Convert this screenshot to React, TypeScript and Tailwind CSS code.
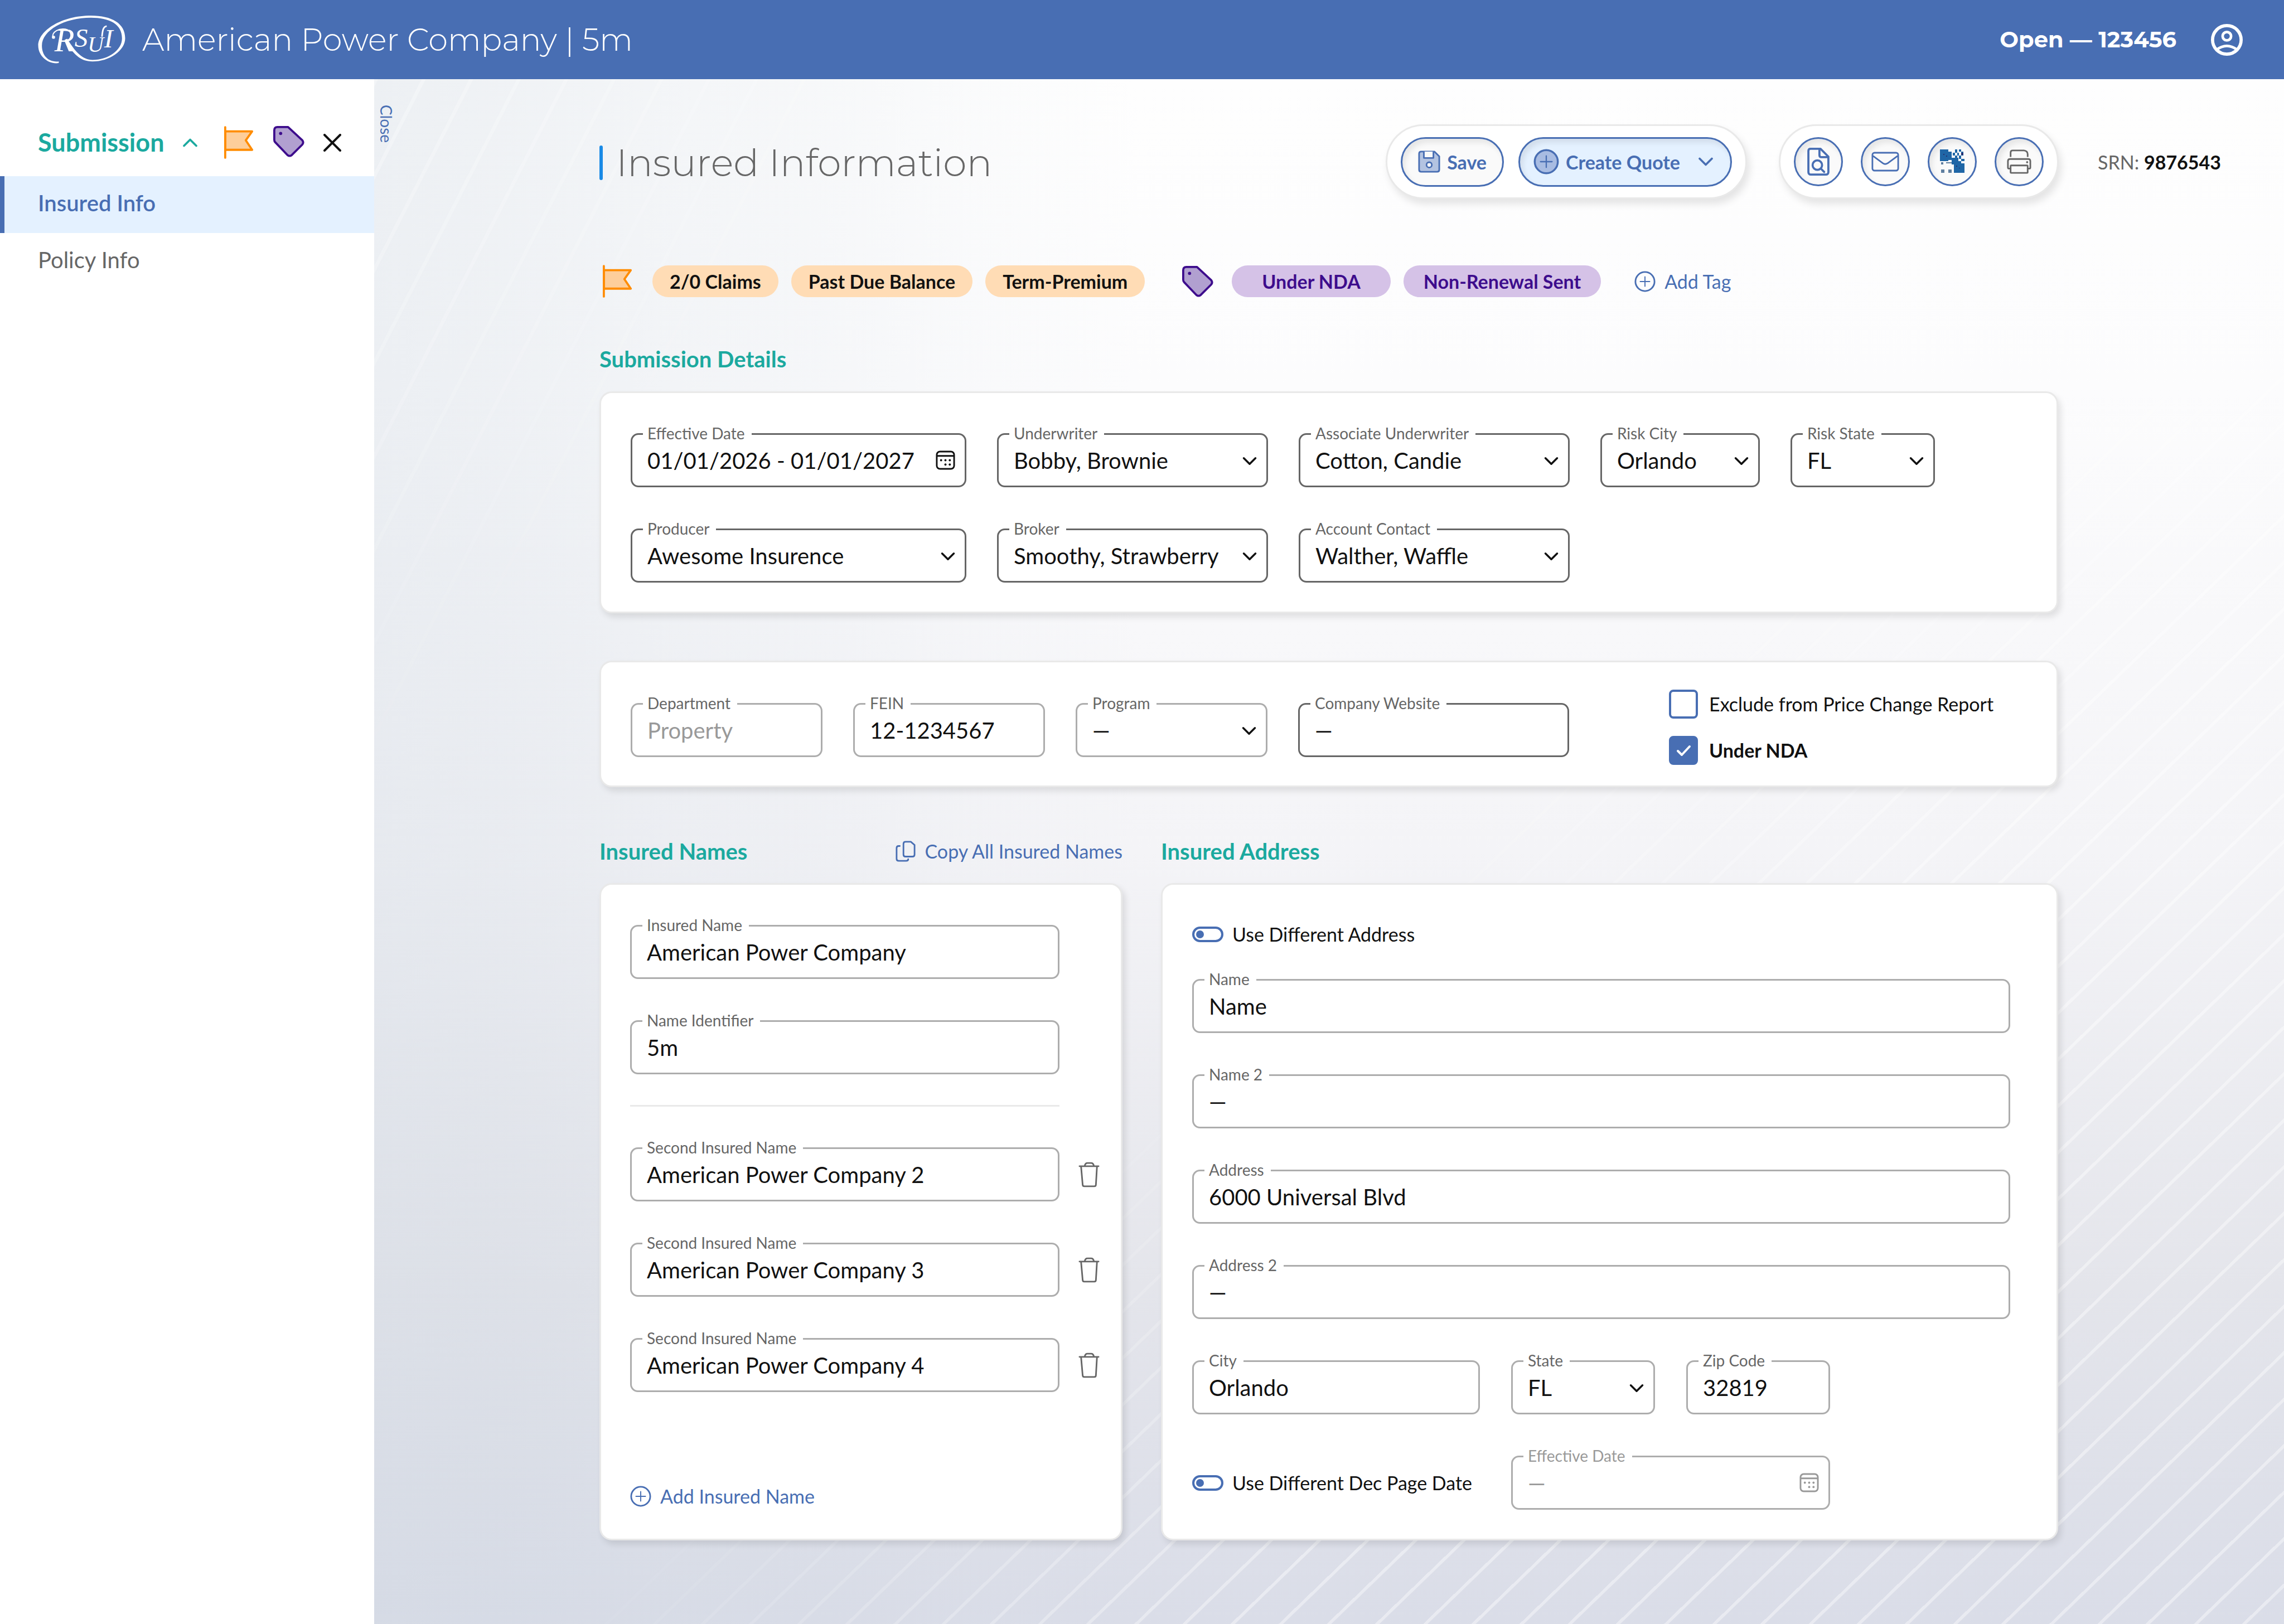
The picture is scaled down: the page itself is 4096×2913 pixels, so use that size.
import { useId, type ReactNode } from 'react';
import { ChevronDown, ChevronUp } from 'lucide-react';
import { clsx } from 'clsx';

function Logo() {
  return (
    <svg viewBox="0 0 165 91" className="h-[86px] w-[157px]" fill="#fff" role="img" aria-label="RSUI">
      <path d="M39 90C20 93 0 78 0 57C0 28 45 0 100 0C140 0 165 15 165 43C165 66 135 87 103 87C79 87 66 72 50 46L55 44C71 70 84 84 103 84C132 84 159 66 159 43C159 16 135 4 100 4C50 4 7 28 7 57C7 77 20 89 39 87Z" />
      <path d="M56 27C40 22 25 31 28 42" fill="none" stroke="#fff" strokeWidth="2" />
      <circle cx="29" cy="41" r="3" />
      <path d="M121 40C122 29 123 21 130 20" fill="none" stroke="#fff" strokeWidth="3" />
      <g className="font-['Liberation_Serif',serif] italic">
        <text x="31" y="68" fontSize="62">R</text>
        <text x="69" y="59" fontSize="50">S</text>
        <text x="94" y="69" fontSize="42">U</text>
        <text x="125" y="60" fontSize="50">I</text>
      </g>
    </svg>
  );
}

function UserIcon() {
  return (
    <svg viewBox="0 0 60 60" className="size-[57px]" fill="none" stroke="#fff" strokeWidth="6">
      <circle cx="30" cy="30" r="27" />
      <circle cx="30" cy="23" r="8" strokeWidth="5" />
      <path d="M10 49Q30 34 50 49" strokeWidth="5" />
    </svg>
  );
}

function FlagIcon() {
  return (
    <svg viewBox="0 0 56 62" className="h-[59px] w-[53px] shrink-0" fill="none" stroke="#ff8c00" strokeWidth="4" strokeLinecap="round" strokeLinejoin="round">
      <path d="M2 10H53L41 27L53 45H2Z" fill="#fdce9b" />
      <path d="M2 2V60" />
    </svg>
  );
}

function TagIcon() {
  return (
    <svg viewBox="0 0 59 59" className="size-[56px] shrink-0" fill="#b1a0d0" stroke="#3d0c8c" strokeWidth="4" strokeLinejoin="round">
      <path d="M8 2H28L55 27Q58 31 55 35L35 55Q31 58 27 55L4 31Q2 29 2 26V8Q2 2 8 2Z" />
      <circle cx="14" cy="14" r="3" fill="#3d0c8c" stroke="none" />
    </svg>
  );
}

function PlusCircleIcon({ filled }: { filled?: boolean }) {
  return (
    <svg viewBox="0 0 40 40" className={clsx('shrink-0', filled ? 'size-[46px]' : 'size-[38px]')} fill={filled ? '#a8bce2' : 'none'} stroke="#486eb3" strokeWidth="3" strokeLinecap="round">
      <circle cx="20" cy="20" r="18" />
      <path d="M20 11V29M11 20H29" strokeWidth="2" />
    </svg>
  );
}

function SaveIcon() {
  return (
    <svg viewBox="0 0 42 42" className="size-[40px] shrink-0" fill="#b3c3e1" stroke="#486eb3" strokeWidth="3" strokeLinejoin="round">
      <path d="M6 2H31L40 11V36Q40 40 36 40H6Q2 40 2 36V6Q2 2 6 2Z" />
      <path d="M11 2V14H29V2" fill="#fafafa" />
      <circle cx="21" cy="27" r="5" fill="#fafafa" />
    </svg>
  );
}

function DocSearchIcon() {
  return (
    <svg viewBox="0 0 42 53" className="h-[50px] w-[40px]" fill="none" stroke="#486eb3" strokeWidth="4" strokeLinecap="round" strokeLinejoin="round">
      <path d="M6 2H25L40 17V46Q40 51 35 51H7Q2 51 2 46V6Q2 2 6 2Z" />
      <path d="M23 3V14Q23 18 27 18H39" />
      <circle cx="19" cy="33" r="9" />
      <path d="M26 40L32 46" />
    </svg>
  );
}

function MailIcon() {
  return (
    <svg viewBox="0 0 53 38" className="h-[36px] w-[50px]" fill="none" stroke="#486eb3" strokeWidth="3" strokeLinejoin="round">
      <rect x="2" y="2" width="49" height="34" rx="4" />
      <path d="M3 8L22 22Q26 25 31 22L50 8" />
    </svg>
  );
}

function PixelIcon() {
  return (
    <svg viewBox="0 0 23 23" className="size-[44px]" fill="#1f66a6" shapeRendering="crispEdges">
      <path d="M0 0H8V2H11V10H8V11H0Z" />
      <path d="M11 8H17V11H20V13H23V22H13V14H11Z" />
      <path d="M14 0H16V3H14ZM18 0H20V2H18ZM20 2H22V6H20ZM16 3H18V6H16ZM12 3H14V6H12ZM18 6H20V9H18ZM20 9H23V11H20ZM14 6H16V8H14Z" />
      <path d="M1 12H3V14H1ZM6 12H11V13H6ZM1 19H4V22H1ZM8 19H11V22H8Z" fill="#5f7fa0" />
      <path d="M20 3H22V5H20ZM3 4H4V5H3ZM6 6H7V7H6ZM15 15H16V16H15ZM18 17H19V18H18Z" fill="#28306e" />
    </svg>
  );
}

function PrinterIcon() {
  return (
    <svg viewBox="0 0 46 46" className="size-[44px]" fill="none" stroke="#666" strokeWidth="3" strokeLinejoin="round">
      <path d="M7 14V6Q7 2 11 2H32Q39 3 39 9V14" />
      <path d="M7 36H4Q2 36 2 34V22Q2 18 6 18H40Q44 18 44 22V34Q44 36 42 36H39" />
      <rect x="7" y="30" width="32" height="14" rx="1" />
      <circle cx="38" cy="24" r="2" fill="#666" stroke="none" />
    </svg>
  );
}

function CopyIcon() {
  return (
    <svg viewBox="0 0 38 40" className="h-[38px] w-[36px] shrink-0" fill="none" stroke="#486eb3" strokeWidth="3" strokeLinecap="round">
      <path d="M19 2H29L36 8V26Q36 30 32 30H19Q15 30 15 26V6Q15 2 19 2Z" />
      <path d="M8 10H6Q2 10 2 14V34Q2 38 6 38H20Q24 38 24 35" />
    </svg>
  );
}

function TrashIcon() {
  return (
    <svg viewBox="0 0 40 48" className="h-[46px] w-[38px]" fill="none" stroke="#666" strokeWidth="3" strokeLinecap="round" strokeLinejoin="round">
      <path d="M2 8H38M12 7Q13 2 17 2H24Q28 2 29 7" />
      <path d="M5 9L8 43Q8 46 11 46H30Q33 46 33 43L35 9" />
    </svg>
  );
}

function CalendarIcon({ color }: { color: string }) {
  return (
    <svg viewBox="0 0 36 36" className="size-[35px]" fill="none" stroke={color} strokeWidth="3">
      <rect x="2" y="2" width="32" height="32" rx="6" />
      <path d="M2 10H34" />
      <g fill={color} stroke="none">
        <circle cx="10" cy="18" r="2" />
        <circle cx="18" cy="18" r="2" />
        <circle cx="26" cy="18" r="2" />
        <circle cx="18" cy="26" r="2" />
        <circle cx="26" cy="26" r="2" />
      </g>
    </svg>
  );
}

interface FieldProps {
  label: string;
  value: string;
  kind?: 'text' | 'select' | 'date';
  strong?: boolean;
  disabled?: boolean;
  className?: string;
}

function Field({ label, value, kind = 'text', strong, disabled, className }: FieldProps) {
  const id = useId();
  const box = clsx(
    'block h-[97px] w-full appearance-none rounded-[14px] border-3 bg-white px-[27px] text-[40px]',
    strong ? 'border-[#666]' : 'border-[#adadad]',
    disabled ? 'text-[#999]' : 'text-[#111]',
  );

  return (
    <div className={clsx('relative min-w-0', className)}>
      {kind === 'select' ? (
        <select id={id} defaultValue={value} className={box}>
          <option>{value}</option>
        </select>
      ) : (
        <input id={id} type="text" defaultValue={value} disabled={disabled} className={box} />
      )}
      <label
        htmlFor={id}
        className={clsx(
          'absolute top-0 left-[22px] -translate-y-1/2 bg-white pr-3 pl-2 text-[28px] leading-8 whitespace-nowrap',
          disabled && kind === 'date' ? 'text-[#999]' : 'text-[#666]',
        )}
      >
        {label}
      </label>
      {kind === 'select' && (
        <ChevronDown size={42} strokeWidth={2} className="pointer-events-none absolute top-[29px] right-3" />
      )}
      {kind === 'date' && (
        <button type="button" aria-label="Open calendar" className="absolute top-[31px] right-5">
          <CalendarIcon color={disabled ? '#999' : '#111'} />
        </button>
      )}
    </div>
  );
}

function Card({ children, className }: { children: ReactNode; className?: string }) {
  return (
    <div className={clsx('rounded-[22px] border-3 border-[#e9e9e9] bg-white shadow-[5px_7px_12px_rgba(0,0,0,0.1)]', className)}>
      {children}
    </div>
  );
}

function Toggle({ label }: { label: string }) {
  return (
    <label className="flex items-center gap-4 text-[34px] leading-[48px] whitespace-nowrap">
      <input
        type="checkbox"
        role="switch"
        className="flex h-[28px] w-[56px] appearance-none items-center rounded-full border-4 border-[#486eb3] bg-white pl-[3px] before:size-[14px] before:rounded-full before:bg-[#486eb3]"
      />
      {label}
    </label>
  );
}

function CheckRow({ label, checked }: { label: string; checked?: boolean }) {
  return (
    <label className={clsx('flex items-center gap-5 text-[34px] leading-[52px] whitespace-nowrap', checked && 'font-bold')}>
      <span className="relative size-[52px]">
        <input
          type="checkbox"
          defaultChecked={checked}
          className="block size-full appearance-none rounded-[8px] border-4 border-[#486eb3] bg-white checked:bg-[#486eb3]"
        />
        {checked && (
          <svg viewBox="0 0 52 52" className="pointer-events-none absolute inset-0" fill="none" stroke="#fff" strokeWidth="4" strokeLinecap="round" strokeLinejoin="round">
            <path d="M16 27L23 34L37 19" />
          </svg>
        )}
      </span>
      {label}
    </label>
  );
}

function Pill({ children, className }: { children: ReactNode; className: string }) {
  return <span className={clsx('flex h-[57px] items-center rounded-full text-[34px] font-bold whitespace-nowrap', className)}>{children}</span>;
}

function RoundButton({ label, children }: { label: string; children: ReactNode }) {
  return (
    <button
      type="button"
      aria-label={label}
      className="flex size-[88px] items-center justify-center rounded-full border-3 border-[#486eb3] bg-[#fafafa] shadow-[inset_5px_7px_10px_rgba(0,0,0,0.08)]"
    >
      {children}
    </button>
  );
}

const heading = 'text-[40px] leading-[48px] font-bold text-[#1ba99f]';
const toolbar = 'flex h-[134px] items-center rounded-full border-3 border-[#e9e9e9] bg-white px-[24px] shadow-[5px_9px_14px_rgba(0,0,0,0.1)]';

function Header() {
  return (
    <header className="flex h-[142px] items-center bg-[#486eb3] pr-[74px] pl-[68px] font-['Montserrat','Inter',sans-serif] text-white">
      <Logo />
      <span className="ml-[30px] text-[56px] font-light">American Power Company | 5m</span>
      <span className="ml-auto text-[40px] font-bold">Open — 123456</span>
      <button type="button" aria-label="Account" className="ml-[62px]">
        <UserIcon />
      </button>
    </header>
  );
}

function Sidebar() {
  return (
    <aside className="w-[671px] shrink-0 bg-white pt-[80px]">
      <div className="mb-[27px] flex h-[67px] items-center pl-[68px]">
        <button type="button" className="flex items-center gap-6 text-[45px] font-bold text-[#1ba99f]">
          Submission
          <ChevronUp size={44} strokeWidth={2} />
        </button>
        <span className="ml-[39px] flex gap-[35px]">
          <FlagIcon />
          <TagIcon />
        </span>
        <button type="button" aria-label="Close menu" className="ml-[34px]">
          <svg viewBox="0 0 32 32" className="size-[32px]" stroke="#111" strokeWidth="4" strokeLinecap="round">
            <path d="M2 2L30 30M30 2L2 30" />
          </svg>
        </button>
      </div>
      <nav className="text-[40px]">
        <a href="#insured" className="flex h-[102px] items-center border-l-8 border-[#486eb3] bg-[#e4f1ff] pb-1.5 pl-[60px] font-semibold text-[#486eb3]">
          Insured Info
        </a>
        <a href="#policy" className="flex h-[102px] items-center pb-1.5 pl-[68px] text-[#666]">
          Policy Info
        </a>
      </nav>
    </aside>
  );
}

function TitleBar() {
  return (
    <div className="flex items-center pr-[113px] pl-[404px]">
      <div className="mr-auto flex items-center gap-6 pt-1">
        <span className="h-[62px] w-[6px] rounded-full bg-[#198ae6]" />
        <h1 className="font-['Montserrat','Inter',sans-serif] text-[68px] leading-[80px] font-light text-[#666]">
          Insured Information
        </h1>
      </div>
      <div className={clsx(toolbar, 'mr-[57px] gap-[26px]')}>
        <button
          type="button"
          className="flex h-[89px] items-center gap-3 rounded-full border-3 border-[#486eb3] bg-[#fafafa] px-[28px] text-[34px] font-bold text-[#486eb3] shadow-[inset_5px_7px_10px_rgba(0,0,0,0.08)]"
        >
          <SaveIcon />
          Save
        </button>
        <button
          type="button"
          className="flex h-[89px] items-center gap-3 rounded-full border-3 border-[#486eb3] bg-[#e4f1ff] pr-[22px] pl-[24px] text-[34px] font-bold text-[#486eb3] shadow-[inset_5px_7px_10px_rgba(0,0,0,0.08)]"
        >
          <PlusCircleIcon filled />
          Create Quote
          <ChevronDown size={44} strokeWidth={2} className="ml-3" />
        </button>
      </div>
      <div className={clsx(toolbar, 'gap-[32px]')}>
        <RoundButton label="Preview document">
          <DocSearchIcon />
        </RoundButton>
        <RoundButton label="Email">
          <MailIcon />
        </RoundButton>
        <RoundButton label="Open image system">
          <PixelIcon />
        </RoundButton>
        <RoundButton label="Print">
          <PrinterIcon />
        </RoundButton>
      </div>
      <p className="ml-[70px] text-[34px] whitespace-nowrap text-[#666]">
        SRN: <strong className="text-[#111]">9876543</strong>
      </p>
    </div>
  );
}

function TagRow() {
  return (
    <div className="mt-[118px] flex items-center pl-[6px]">
      <FlagIcon />
      <div className="ml-[36px] flex gap-[23px] text-[#111]">
        <Pill className="bg-[#ffdcb5] px-[31px]">2/0 Claims</Pill>
        <Pill className="bg-[#ffdcb5] px-[31px]">Past Due Balance</Pill>
        <Pill className="bg-[#ffdcb5] px-[31px]">Term-Premium</Pill>
      </div>
      <span className="ml-[67px]">
        <TagIcon />
      </span>
      <div className="ml-[33px] flex gap-[23px] text-[#3d0c8c]">
        <Pill className="bg-[#d5c2e7] px-[54px]">Under NDA</Pill>
        <Pill className="bg-[#d5c2e7] px-[36px]">Non-Renewal Sent</Pill>
      </div>
      <button type="button" className="ml-[60px] flex items-center gap-4 text-[34px] text-[#486eb3]">
        <PlusCircleIcon />
        Add Tag
      </button>
    </div>
  );
}

function InsuredNames() {
  return (
    <section className="flex flex-col">
      <div className="flex items-center justify-between">
        <h2 className={heading}>Insured Names</h2>
        <button type="button" className="flex items-center gap-4 text-[34px] leading-[48px] text-[#486eb3]">
          <CopyIcon />
          Copy All Insured Names
        </button>
      </div>
      <Card className="mt-[33px] flex flex-1 flex-col pt-[72px] pr-[38px] pb-[52px] pl-[52px]">
        <div className="mr-[72px] flex flex-col gap-[74px] border-b-3 border-[#e9e9e9] pb-[55px]">
          <Field label="Insured Name" value="American Power Company" />
          <Field label="Name Identifier" value="5m" />
        </div>
        <ul className="mt-[73px] flex flex-col gap-[74px]">
          {[2, 3, 4].map((n) => (
            <li key={n} className="flex items-center gap-[34px]">
              <Field label="Second Insured Name" value={`American Power Company ${n}`} className="flex-1" />
              <button type="button" aria-label={`Delete American Power Company ${n}`}>
                <TrashIcon />
              </button>
            </li>
          ))}
        </ul>
        <button type="button" className="mt-auto flex items-center gap-4 text-[34px] leading-[48px] text-[#486eb3]">
          <PlusCircleIcon />
          Add Insured Name
        </button>
      </Card>
    </section>
  );
}

function InsuredAddress() {
  return (
    <section>
      <h2 className={heading}>Insured Address</h2>
      <Card className="mt-[33px] pt-[65px] pr-[83px] pb-[52px] pl-[53px]">
        <Toggle label="Use Different Address" />
        <div className="mt-[56px] flex flex-col gap-[74px]">
          <Field label="Name" value="Name" />
          <Field label="Name 2" value="—" />
          <Field label="Address" value="6000 Universal Blvd" />
          <Field label="Address 2" value="—" />
          <div className="grid grid-cols-[516fr_258fr_258fr_267fr] items-center gap-x-[56px] gap-y-[74px]">
            <Field label="City" value="Orlando" />
            <Field label="State" value="FL" kind="select" />
            <Field label="Zip Code" value="32819" />
            <div className="col-start-1">
              <Toggle label="Use Different Dec Page Date" />
            </div>
            <Field label="Effective Date" value="—" kind="date" disabled className="col-span-2" />
          </div>
        </div>
      </Card>
    </section>
  );
}

export default function App() {
  return (
    <div className="flex min-h-screen flex-col bg-white font-['Lato',sans-serif] text-[#111]">
      <Header />
      <div className="flex flex-1">
        <Sidebar />
        <main className="relative isolate min-w-0 flex-1 bg-[linear-gradient(to_right,rgba(205,214,224,0.35),rgba(205,214,224,0)_40%),linear-gradient(to_bottom,#fefefe_0%,#fcfcfd_20%,#f4f4f7_50%,#e4e5eb_78%,#dadde8_100%)] pt-[81px] pb-[151px]">
          <div className="absolute inset-0 -z-10 bg-[repeating-linear-gradient(136deg,rgba(255,255,255,0.4)_0px,rgba(255,255,255,0.4)_5px,transparent_6px,transparent_60px)] mask-[linear-gradient(136deg,transparent_50%,black_70%)]" />
          <div className="absolute inset-0 -z-10 bg-[repeating-linear-gradient(117deg,rgba(255,255,255,0.3)_0px,rgba(255,255,255,0.3)_6px,transparent_7px,transparent_76px)] mask-[linear-gradient(135deg,black_0%,transparent_22%)]" />
          <button type="button" className="absolute top-[46px] left-2 text-[28px] leading-7 text-[#486eb3] [writing-mode:vertical-rl]">
            Close
          </button>

          <TitleBar />
          <div className="pr-[405px] pl-[404px]">
            <TagRow />

            <h2 className={clsx(heading, 'mt-[86px]')}>Submission Details</h2>
            <Card className="mt-[34px] grid grid-cols-[602fr_486fr_486fr_286fr_259fr] gap-x-[55px] gap-y-[74px] pt-[72px] pr-[218px] pb-[52px] pl-[53px]">
              <Field label="Effective Date" value="01/01/2026 - 01/01/2027" kind="date" strong />
              <Field label="Underwriter" value="Bobby, Brownie" kind="select" strong />
              <Field label="Associate Underwriter" value="Cotton, Candie" kind="select" strong />
              <Field label="Risk City" value="Orlando" kind="select" strong />
              <Field label="Risk State" value="FL" kind="select" strong />
              <Field label="Producer" value="Awesome Insurence" kind="select" strong />
              <Field label="Broker" value="Smoothy, Strawberry" kind="select" strong />
              <Field label="Account Contact" value="Walther, Waffle" kind="select" strong />
            </Card>

            <Card className="mt-[85px] grid grid-cols-[344fr_344fr_344fr_486fr_767fr] items-start gap-x-[55px] pt-[49px] pr-[52px] pb-[37px] pl-[53px]">
              <Field label="Department" value="Property" disabled className="mt-6" />
              <Field label="FEIN" value="12-1234567" className="mt-6" />
              <Field label="Program" value="—" kind="select" className="mt-6" />
              <Field label="Company Website" value="—" strong className="mt-6" />
              <div className="flex flex-col gap-[31px] pl-[124px]">
                <CheckRow label="Exclude from Price Change Report" />
                <CheckRow label="Under NDA" checked />
              </div>
            </Card>

            <div className="mt-[91px] grid grid-cols-[938fr_1609fr] gap-[69px]">
              <InsuredNames />
              <InsuredAddress />
            </div>
          </div>
        </main>
      </div>
    </div>
  );
}
